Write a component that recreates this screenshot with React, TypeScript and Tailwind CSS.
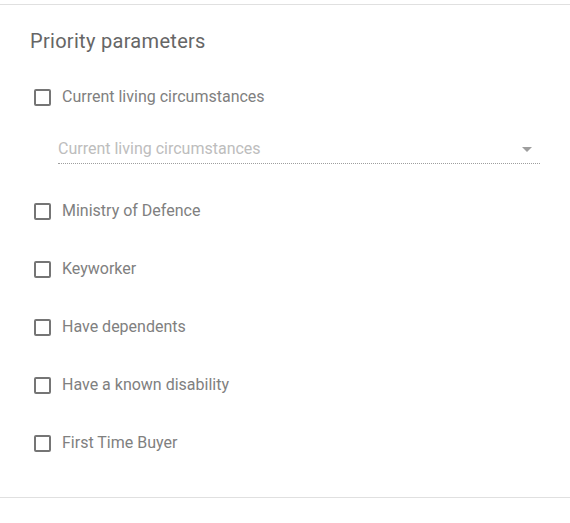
import React from "react";

const items = [
  "Ministry of Defence",
  "Keyworker",
  "Have dependents",
  "Have a known disability",
  "First Time Buyer",
];

function Row({ label }: { label: string }) {
  return (
    <label className="flex h-[58px] items-center">
      <span className="ml-[34px] box-border h-[17px] w-[17px] rounded-[2px] border-2 border-[#757575]" />
      <span className="ml-[11px] text-[16px] leading-[20px] text-[#808080]">{label}</span>
    </label>
  );
}

export default function App() {
  return (
    <div className="h-[523px] w-[570px] bg-white" style={{ fontFamily: "Roboto, 'Liberation Sans', sans-serif" }}>
      <div className="h-[4px]" />
      <div className="border-t border-b border-[#e0e0e0]">
        <div className="h-[63px] pl-[30px] pt-[24px]">
          <h2 className="text-[20px] leading-[24px] font-normal tracking-[0.3px] text-[#666666]">Priority parameters</h2>
        </div>
        <Row label="Current living circumstances" />
        <div className="h-[56px] pl-[58px] pr-[30px] pt-[11px]">
          <div className="flex h-[27px] items-start justify-between border-b border-dotted border-[#9e9e9e]">
            <span className="pt-[2px] text-[16px] leading-[20px] text-[#bdbdbd]">Current living circumstances</span>
            <svg width="10" height="5" viewBox="0 0 10 5" className="mr-[8px] mt-[10px]">
              <path d="M0 0 L10 0 L5 5 Z" fill="#9e9e9e" />
            </svg>
          </div>
        </div>
        {items.map((l) => (
          <Row key={l} label={l} />
        ))}
        <div className="h-[25px]" />
      </div>
    </div>
  );
}
